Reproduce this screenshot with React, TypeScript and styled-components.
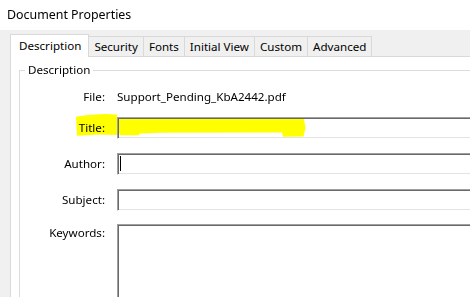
import React from "react";
import styled, { createGlobalStyle } from "styled-components";

const GlobalStyle = createGlobalStyle`
  html, body {
    margin: 0;
    padding: 0;
    background: #ffffff;
    overflow: hidden;
  }
  body {
    font-family: "Noto Sans", "Open Sans", sans-serif;
    font-size: 11.6px;
    color: #000000;
  }
`;

const tabs = ["Description", "Security", "Fonts", "Initial View", "Custom", "Advanced"];

const App = () => {
  return (
    <>
      <GlobalStyle />
      <Window>
        <TitleBar>Document Properties</TitleBar>
        <DialogBody>
          <TabStrip>
            {tabs.map((t, i) => (
              <Tab key={t} $active={i === 0}>
                {t}
              </Tab>
            ))}
          </TabStrip>
          <Panel>
            <Group>
              <Legend>Description</Legend>
              <Row $top={10}>
                <Label>File:</Label>
                <Value>Support_Pending_KbA2442.pdf</Value>
              </Row>
              <Row $top={11}>
                <Label>Title:</Label>
                <Field $h={22} />
              </Row>
              <Row $top={14}>
                <Label>Author:</Label>
                <Field $h={22}>
                  <Caret />
                </Field>
              </Row>
              <Row $top={14}>
                <Label>Subject:</Label>
                <Field $h={22} />
              </Row>
              <Row $top={13} $alignTop>
                <Label $pad={1}>Keywords:</Label>
                <Field $h={100} />
              </Row>
            </Group>
          </Panel>
        </DialogBody>
        <Highlight width="470" height="297" viewBox="0 0 470 297">
          <path d="M76,116.8 L88,115 L104,114 L117,114.4 L117,135 L100,134.4 L77,135.8 Z" />
          <path d="M119,119 L304,119 L305.5,128 L303.5,136.5 L283,136.8 L282,132.6 L160,132.8 L140,133.4 L139,135.2 L120,135.2 L119,132.4 Z" />
        </Highlight>
      </Window>
    </>
  );
};

export default App;

const Window = styled.div`
  position: relative;
  width: 470px;
  height: 297px;
  overflow: hidden;
  display: flex;
  flex-direction: column;
`;

const TitleBar = styled.div`
  flex: 0 0 30px;
  padding-left: 7px;
  display: flex;
  align-items: center;
  padding-bottom: 1px;
  box-sizing: border-box;
  font-size: 12.4px;
  background: #ffffff;
`;

const DialogBody = styled.div`
  flex: 1 0 auto;
  width: 560px;
  background: #f0f0f0;
  padding: 4px 0 0 10px;
  display: flex;
  flex-direction: column;
`;

const TabStrip = styled.div`
  flex: 0 0 22px;
  display: flex;
  align-items: flex-end;
  position: relative;
  z-index: 1;
`;

const Tab = styled.div<{ $active?: boolean }>`
  box-sizing: border-box;
  border: 1px solid #d9d9d9;
  border-bottom: none;
  margin-left: -1px;
  display: flex;
  align-items: center;
  height: ${(p) => (p.$active ? "23px" : "20px")};
  margin-bottom: ${(p) => (p.$active ? "-1px" : "0")};
  padding: ${(p) => (p.$active ? "0 7px 2px 8px" : "0 5px 1px 5px")};
  background: ${(p) => (p.$active ? "#ffffff" : "#f0f0f0")};
  &:first-child {
    margin-left: 0;
  }
`;

const Panel = styled.div`
  flex: 1 0 auto;
  background: #ffffff;
  border-top: 1px solid #d9d9d9;
  border-left: 1px solid #d9d9d9;
  padding: 5px 0 0 8px;
`;

const Group = styled.fieldset`
  margin: 0;
  padding: 0 0 20px 0;
  border: 1px solid #dcdcdc;
  min-width: 0;
`;

const Legend = styled.legend`
  margin-left: 5px;
  padding: 0 3px;
  line-height: 16px;
`;

const Row = styled.div<{ $top: number; $alignTop?: boolean }>`
  display: grid;
  grid-template-columns: 85px 1fr;
  column-gap: 12px;
  align-items: ${(p) => (p.$alignTop ? "start" : "center")};
  margin-top: ${(p) => p.$top}px;
  min-height: 18px;
`;

const Label = styled.div<{ $pad?: number }>`
  text-align: right;
  line-height: 16px;
  padding-top: ${(p) => p.$pad ?? 0}px;
`;

const Value = styled.div`
  line-height: 16px;
`;

const Field = styled.div<{ $h: number }>`
  position: relative;
  box-sizing: border-box;
  height: ${(p) => p.$h}px;
  background: #ffffff;
  border: 1px solid;
  border-color: #a0a0a0 #ffffff #ffffff #a0a0a0;
  box-shadow: inset 1px 1px 0 #696969, inset -1px -1px 0 #e3e3e3;
`;

const Caret = styled.span`
  position: absolute;
  left: 2px;
  top: 2px;
  width: 1px;
  height: 15px;
  background: #000000;
`;

const Highlight = styled.svg`
  position: absolute;
  left: 0;
  top: 0;
  pointer-events: none;
  mix-blend-mode: multiply;
  fill: #ffff00;
`;
